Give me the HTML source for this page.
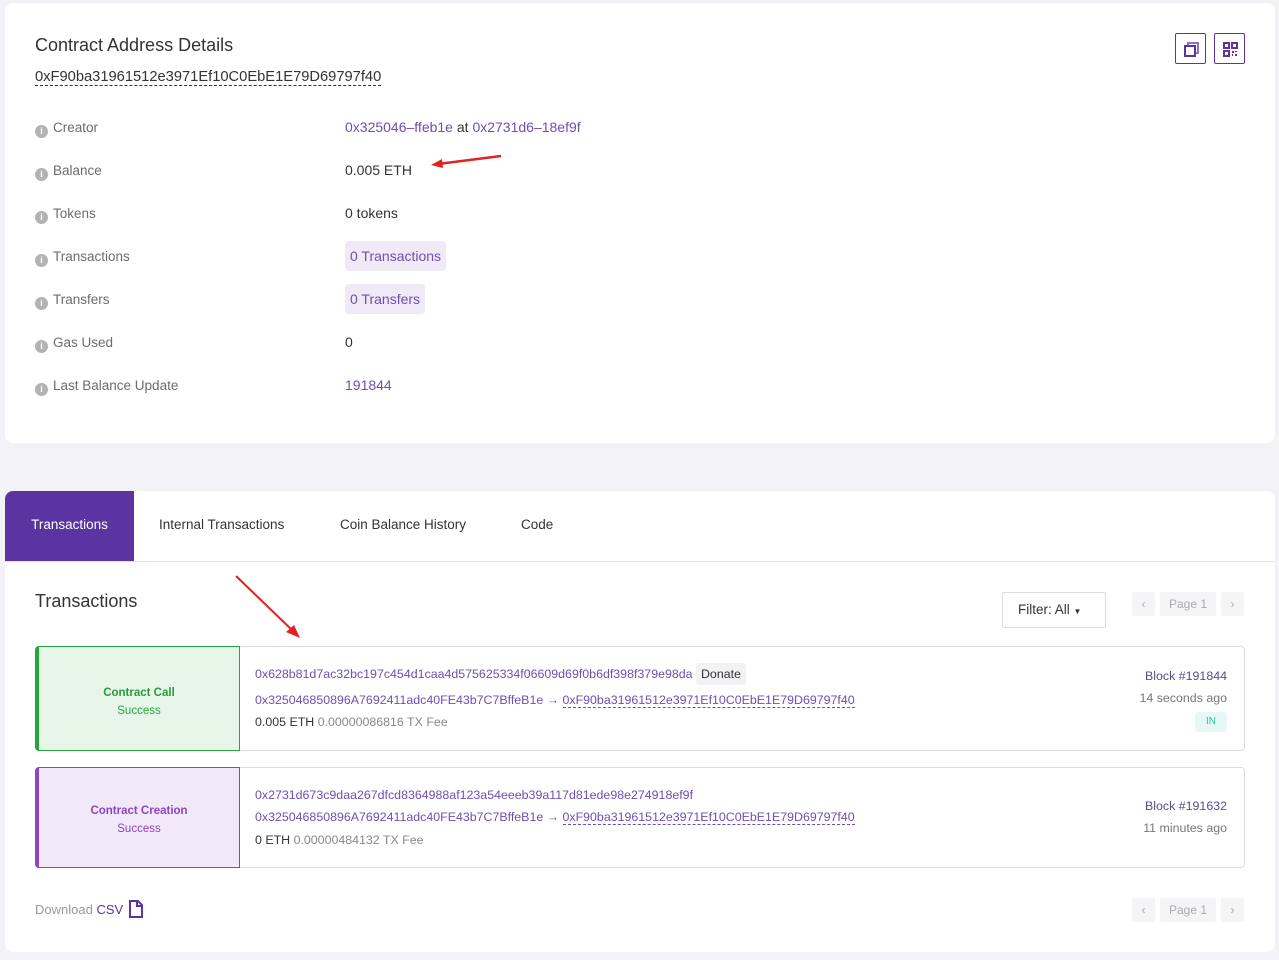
<!DOCTYPE html>
<html><head><meta charset="utf-8"><style>
*{box-sizing:border-box;margin:0;padding:0}
body{width:1279px;height:960px;background:#f2f2f7;font-family:"Liberation Sans",sans-serif;position:relative;overflow:hidden;color:#333}
.card{position:absolute;background:#fff;border-radius:8px}
.a{position:absolute;white-space:nowrap}
.lbl{color:#6c6c6c;font-size:13.5px;line-height:16px}
.ic{display:inline-block;width:13px;height:13px;border-radius:50%;background:#b3b3b3;color:#fff;font-size:9px;font-weight:bold;text-align:center;line-height:13px;margin-right:5px;vertical-align:-2px}
.val{font-size:14px;color:#333}
.lk{color:#6f4fb0}
.pill{background:#efeaf6;border-radius:4px;padding:7px 5px;color:#6f4fb0}
.dash{border-bottom:1px dashed #333}
.tx{font-size:12.4px}
.btn{position:absolute;border:1px solid #5c34a2;border-radius:2px;width:31px;height:31px}
.pg{position:absolute;background:#f5f5f8;border-radius:2px;color:#aaa;font-size:12px;text-align:center;line-height:24px;height:24px}
</style></head><body>
<div class="card" style="left:5px;top:3px;width:1270px;height:440px"></div>
<div class="a" style="left:35px;top:35px;font-size:18px;color:#333">Contract Address Details</div>
<div class="a dash" style="left:35px;top:69px;font-size:14.7px;color:#333">0xF90ba31961512e3971Ef10C0EbE1E79D69797f40</div>
<div class="btn" style="left:1175px;top:33px"><svg width="31" height="31"><rect x="9" y="12" width="10" height="10" fill="none" stroke="#5c34a2" stroke-width="2"/><path d="M12 11V9h10v10h-2" fill="none" stroke="#8f72c4" stroke-width="2"/></svg></div>
<div class="btn" style="left:1214px;top:33px"><svg width="31" height="31"><rect x="9" y="9" width="5" height="5" fill="none" stroke="#5c34a2" stroke-width="2"/><rect x="17" y="9" width="5" height="5" fill="none" stroke="#5c34a2" stroke-width="2"/><rect x="9" y="17" width="5" height="5" fill="none" stroke="#5c34a2" stroke-width="2"/><path d="M17 17h2v2h-2zM20 20h2v2h-2zM20 17h2v1h-2zM17 20h1v2h-1z" fill="#5c34a2"/></svg></div>

<div class="a lbl" style="left:35px;top:120px"><span class="ic">i</span>Creator</div>
<div class="a val" style="left:345px;top:119px"><span class="lk">0x325046–ffeb1e</span> at <span class="lk">0x2731d6–18ef9f</span></div>
<div class="a lbl" style="left:35px;top:163px"><span class="ic">i</span>Balance</div>
<div class="a val" style="left:345px;top:162px">0.005 ETH</div>
<svg class="a" style="left:428px;top:150px" width="80" height="20"><path d="M73 6L10 14" stroke="#e3211f" stroke-width="2.5"/><path d="M3 15L14 9L15 18Z" fill="#e3211f"/></svg>
<div class="a lbl" style="left:35px;top:206px"><span class="ic">i</span>Tokens</div>
<div class="a val" style="left:345px;top:205px">0 tokens</div>
<div class="a lbl" style="left:35px;top:249px"><span class="ic">i</span>Transactions</div>
<div class="a val pill" style="left:345px;top:241px">0 Transactions</div>
<div class="a lbl" style="left:35px;top:292px"><span class="ic">i</span>Transfers</div>
<div class="a val pill" style="left:345px;top:284px">0 Transfers</div>
<div class="a lbl" style="left:35px;top:335px"><span class="ic">i</span>Gas Used</div>
<div class="a val" style="left:345px;top:334px">0</div>
<div class="a lbl" style="left:35px;top:378px"><span class="ic">i</span>Last Balance Update</div>
<div class="a val lk" style="left:345px;top:377px">191844</div>

<div class="card" style="left:5px;top:491px;width:1270px;height:461px"></div>
<div class="a" style="left:5px;top:491px;width:129px;height:70px;background:#5c34a2;border-top-left-radius:8px;color:#fff;font-size:13.5px;line-height:68px;text-align:center">Transactions</div>
<div class="a" style="left:159px;top:517px;font-size:13.5px">Internal Transactions</div>
<div class="a" style="left:340px;top:517px;font-size:13.5px">Coin Balance History</div>
<div class="a" style="left:521px;top:517px;font-size:13.5px">Code</div>
<div class="a" style="left:5px;top:561px;width:1270px;height:1px;background:#e4e4ec"></div>

<div class="a" style="left:35px;top:591px;font-size:18px">Transactions</div>
<svg class="a" style="left:230px;top:570px" width="80" height="75"><path d="M6 6L62 60" stroke="#e3211f" stroke-width="2"/><path d="M70 68L56 62L64 55Z" fill="#e3211f"/></svg>
<div class="a" style="left:1002px;top:592px;width:104px;height:36px;border:1px solid #ddd;border-radius:2px;font-size:13.5px;line-height:34px;padding-left:15px">Filter: All <span style="font-size:8px">▼</span></div>
<div class="pg" style="left:1132px;top:592px;width:23px">‹</div>
<div class="pg" style="left:1160px;top:592px;width:56px">Page 1</div>
<div class="pg" style="left:1221px;top:592px;width:23px">›</div>

<div class="a" style="left:35px;top:646px;width:1210px;height:105px;border:1px solid #ddd;border-radius:4px"></div>
<div class="a" style="left:35px;top:646px;width:205px;height:105px;background:#e8f6ea;border:1px solid #20a93b;border-left:4px solid #20a93b;border-radius:4px 0 0 4px;text-align:center;font-size:11.5px;padding-top:37px;line-height:18px;color:#20a93b"><b style="color:#2a9a3a">Contract Call</b><br>Success</div>
<div class="a tx lk" style="left:255px;top:667px">0x628b81d7ac32bc197c454d1caa4d575625334f06609d69f0b6df398f379e98da <span style="background:#f2f2f5;color:#333;padding:4px 5px;border-radius:3px">Donate</span></div>
<div class="a tx lk" style="left:255px;top:693px">0x325046850896A7692411adc40FE43b7C7BffeB1e → <span style="border-bottom:1px dashed #6f4fb0">0xF90ba31961512e3971Ef10C0EbE1E79D69797f40</span></div>
<div class="a tx" style="left:255px;top:715px">0.005 ETH <span style="color:#888">0.00000086816 TX Fee</span></div>
<div class="a tx" style="right:52px;top:669px;color:#5b4a8a">Block #191844</div>
<div class="a tx" style="right:52px;top:691px;color:#777">14 seconds ago</div>
<div class="a" style="left:1195px;top:712px;width:32px;height:20px;background:#e6f8f5;color:#2ec0a4;font-size:10px;text-align:center;line-height:20px;border-radius:3px">IN</div>

<div class="a" style="left:35px;top:767px;width:1210px;height:101px;border:1px solid #ddd;border-radius:4px"></div>
<div class="a" style="left:35px;top:767px;width:205px;height:101px;background:#f2e9f8;border:1px solid #8e44c3;border-left:4px solid #8e44c3;border-radius:4px 0 0 4px;text-align:center;font-size:11.5px;padding-top:34px;line-height:18px;color:#8e44c3"><b>Contract Creation</b><br>Success</div>
<div class="a tx lk" style="left:255px;top:788px">0x2731d673c9daa267dfcd8364988af123a54eeeb39a117d81ede98e274918ef9f</div>
<div class="a tx lk" style="left:255px;top:810px">0x325046850896A7692411adc40FE43b7C7BffeB1e → <span style="border-bottom:1px dashed #6f4fb0">0xF90ba31961512e3971Ef10C0EbE1E79D69797f40</span></div>
<div class="a tx" style="left:255px;top:833px">0 ETH <span style="color:#888">0.00000484132 TX Fee</span></div>
<div class="a tx" style="right:52px;top:799px;color:#5b4a8a">Block #191632</div>
<div class="a tx" style="right:52px;top:821px;color:#777">11 minutes ago</div>

<div class="a" style="left:35px;top:902px;font-size:13px;color:#999">Download <span style="color:#5c34a2">CSV</span></div>
<svg class="a" style="left:128px;top:900px" width="16" height="18"><path d="M2 1h8l4 4v12H2z" fill="none" stroke="#5c34a2" stroke-width="2"/><path d="M9 1v5h5" fill="none" stroke="#5c34a2" stroke-width="2"/></svg>
<div class="pg" style="left:1132px;top:898px;width:23px">‹</div>
<div class="pg" style="left:1160px;top:898px;width:56px">Page 1</div>
<div class="pg" style="left:1221px;top:898px;width:23px">›</div>
</body></html>
